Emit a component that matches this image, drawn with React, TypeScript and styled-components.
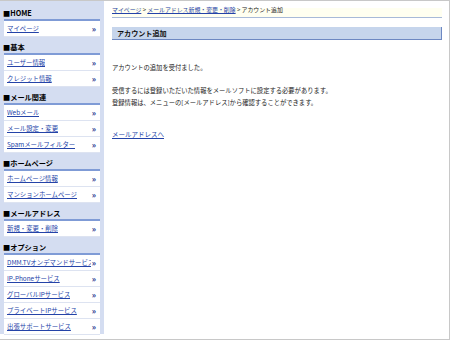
import React from "react";
import styled, { createGlobalStyle } from "styled-components";

const Global = createGlobalStyle`
  html, body { margin: 0; padding: 0; background: #fff; }
  body { font-family: "Noto Sans CJK JP", "Liberation Sans", sans-serif; font-size: 7px; color: #222; }
  a { color: #2443a8; }
`;

const Frame = styled.div`
  width: 450px;
  height: 340px;
  box-sizing: border-box;
  border: 1px solid #c8c8c8;
  border-left: none;
  display: flex;
  align-items: flex-start;
  overflow: hidden;
`;

const Sidebar = styled.nav`
  width: 104px;
  height: 333px;
  flex-shrink: 0;
  background: #d4ddf1;
  padding: 6px 4px 0 4px;
  box-sizing: border-box;
  display: flex;
  flex-direction: column;
`;

const Group = styled.div`
  margin-bottom: 4px;
`;

const GroupTitle = styled.div`
  font-weight: bold;
  font-size: 7.2px;
  line-height: 12px;
  color: #000;
  margin-left: -1px;
`;

const ItemList = styled.ul`
  list-style: none;
  margin: 0;
  padding: 0;
  background: #fff;
  border-top: 2px solid #7f9bd6;
`;

const Item = styled.li`
  height: 15px;
  display: flex;
  align-items: center;
  justify-content: space-between;
  padding: 0 4px 0 3px;
  border-bottom: 1px solid #dde3f1;
  font-size: 6.4px;
  white-space: nowrap;
  overflow: hidden;
  a { overflow: hidden; }
`;

const Arrow = styled.span`
  color: #1a2f8a;
  font-weight: bold;
  font-size: 8px;
  line-height: 8px;
  margin-left: 1px;
`;

const Main = styled.main`
  flex: 1;
  padding: 4px 7px 0 8px;
  display: flex;
  flex-direction: column;
`;

const Crumbs = styled.div`
  background: linear-gradient(to bottom, #fff 0 3px, #fffff0 3px);
  border-bottom: 1px solid #a8bad8;
  height: 12px;
  font-size: 5.9px;
  line-height: 10px;
  white-space: nowrap;
  color: #222;
`;

const Heading = styled.h1`
  margin: 9px 0 0 0;
  height: 12px;
  background: #c6d5ec;
  border-right: 1px solid #6d88c2;
  border-bottom: 1px solid #6d88c2;
  font-size: 7.1px;
  font-weight: bold;
  line-height: 12px;
  padding-left: 5px;
  color: #111;
`;

const Body = styled.div`
  padding-top: 22px;
  display: flex;
  flex-direction: column;
  gap: 11px;
`;

const Para = styled.p`
  margin: 0;
  font-size: 6.3px;
  line-height: 12px;
`;

const BackLink = styled.a`
  margin-top: 19px;
  font-size: 6.5px;
  line-height: 12px;
  align-self: flex-start;
`;

const groups: { title: string; items: string[] }[] = [
  { title: "■HOME", items: ["マイページ"] },
  { title: "■基本", items: ["ユーザー情報", "クレジット情報"] },
  { title: "■メール関連", items: ["Webメール", "メール設定・変更", "Spamメールフィルター"] },
  { title: "■ホームページ", items: ["ホームページ情報", "マンションホームページ"] },
  { title: "■メールアドレス", items: ["新規・変更・削除"] },
  {
    title: "■オプション",
    items: ["DMM.TVオンデマンドサービス", "IP-Phoneサービス", "グローバルIPサービス", "プライベートIPサービス", "出張サポートサービス"],
  },
];

export default function App() {
  return (
    <>
      <Global />
      <Frame>
        <Sidebar>
          {groups.map((g) => (
            <Group key={g.title}>
              <GroupTitle>{g.title}</GroupTitle>
              <ItemList>
                {g.items.map((it) => (
                  <Item key={it}>
                    <a href="#">{it}</a>
                    <Arrow>»</Arrow>
                  </Item>
                ))}
              </ItemList>
            </Group>
          ))}
        </Sidebar>
        <Main>
          <Crumbs>
            <a href="#">マイページ</a> &gt; <a href="#">メールアドレス新規・変更・削除</a> &gt; アカウント追加
          </Crumbs>
          <Heading>アカウント追加</Heading>
          <Body>
            <Para>アカウントの追加を受付ました。</Para>
            <Para>
              受信するには登録いただいた情報をメールソフトに設定する必要があります。
              <br />
              登録情報は、メニューの[メールアドレス]から確認することができます。
            </Para>
          </Body>
          <BackLink href="#">メールアドレスへ</BackLink>
        </Main>
      </Frame>
    </>
  );
}
